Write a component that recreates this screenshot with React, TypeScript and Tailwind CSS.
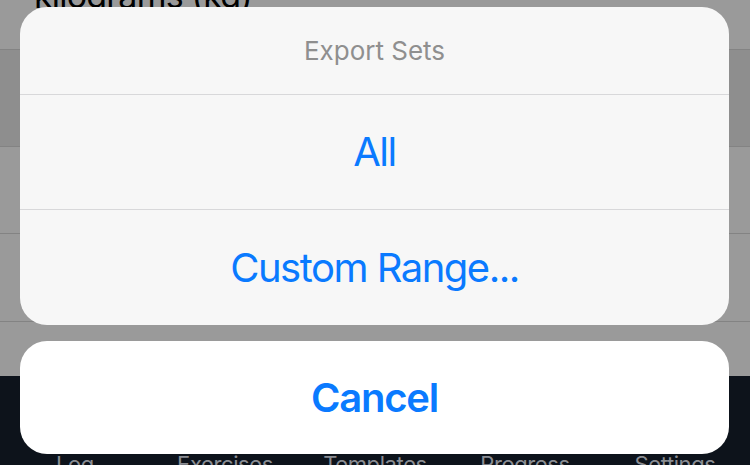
import React from 'react';

const tabs = ['Log', 'Exercises', 'Templates', 'Progress', 'Settings'];

function SettingsBackdrop() {
  return (
    <div className="flex h-full flex-col">
      <div className="h-[50px] shrink-0 overflow-hidden border-b border-[#838383] bg-[#9a9a9a]">
        <p className="-mt-[23px] pl-[34px] text-[34px] leading-[38px] tracking-[-0.8px] text-black">kilograms (kg)</p>
      </div>
      <div className="h-[97px] shrink-0 border-b border-[#838383] bg-[#8e8e8e]" />
      <div className="h-[87px] shrink-0 border-b border-[#838383] bg-[#9a9a9a]" />
      <div className="h-[88px] shrink-0 border-b border-[#838383] bg-[#9a9a9a]" />
      <div className="h-[54px] shrink-0 bg-[#9a9a9a]" />
      <nav className="grid flex-1 grid-cols-5 bg-[#0d131b] pt-[74px]">
        {tabs.map((tab) => (
          <span key={tab} className="text-center text-[22px] leading-[28px] tracking-[-0.4px] text-[#8a8d93]">
            {tab}
          </span>
        ))}
      </nav>
    </div>
  );
}

export default function App() {
  return (
    <div
      className="relative h-[465px] w-[750px] overflow-hidden"
      style={{ fontFamily: 'Inter, "Noto Sans", sans-serif' }}
    >
      <SettingsBackdrop />

      <div className="absolute left-[20px] right-[21px] top-[7px] flex flex-col gap-[16px]">
        <section className="overflow-hidden rounded-[27px] bg-[#f7f7f7]">
          <header className="flex h-[88px] items-center justify-center border-b border-[#d8d8da]">
            <h2 className="text-[26px] text-[#8f8f8f]">Export Sets</h2>
          </header>
          <button className="flex h-[115px] w-full items-center justify-center border-b border-[#d8d8da] text-[40px] tracking-[-1.5px] text-[#0a7aff]">
            All
          </button>
          <button className="flex h-[115px] w-full items-center justify-center text-[40px] tracking-[-1.5px] text-[#0a7aff]">
            Custom Range...
          </button>
        </section>
        <button className="flex h-[113px] w-full items-center justify-center rounded-[27px] bg-white text-[40px] font-semibold tracking-[-1.2px] text-[#0a7aff]">
          Cancel
        </button>
      </div>
    </div>
  );
}
